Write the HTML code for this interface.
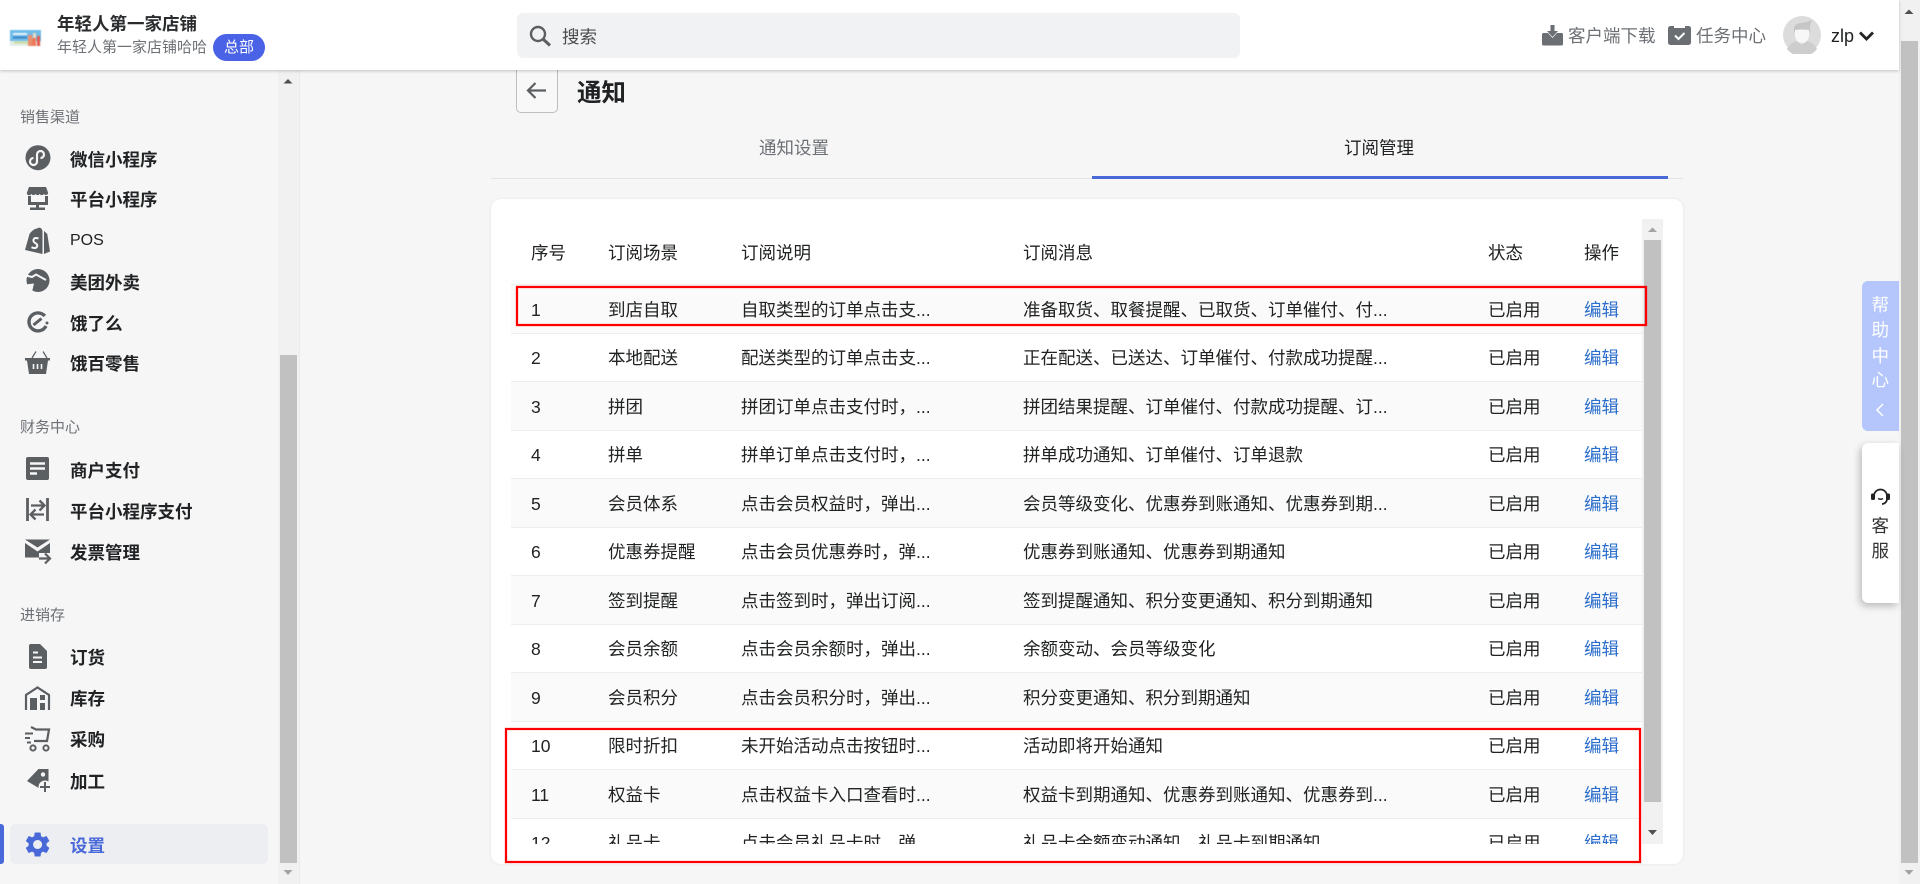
<!DOCTYPE html>
<html lang="zh-CN"><head><meta charset="utf-8"><title>通知</title>
<style>
*{box-sizing:border-box}
html,body{margin:0;padding:0;width:1920px;height:884px;overflow:hidden;background:#f6f6f7;color:#202223;font-family:"Liberation Sans","Noto Sans CJK SC",sans-serif;font-size:17.5px}
.a{position:absolute}
.t{position:absolute;white-space:nowrap;line-height:24px;height:24px}
.head{position:absolute;left:0;top:0;width:1899px;height:70px;background:#fff;box-shadow:0 1px 3px rgba(0,0,0,.22);z-index:5}
.side{position:absolute;left:0;top:70px;width:300px;height:814px;background:#f6f6f7;border-right:1px solid #ebebec}
.g{position:absolute;left:20px;font-size:15px;color:#6d7175;line-height:20px;white-space:nowrap}
.m{position:absolute;left:70px;font-weight:700;line-height:24px;white-space:nowrap;color:#202223}
.sb{position:absolute;background:#f1f1f1}
.th{position:absolute;background:#c1c1c1}
.card{position:absolute;left:491px;top:199px;width:1192px;height:665px;background:#fff;border-radius:10px;box-shadow:0 0 3px rgba(23,24,24,.08)}
.tb{position:absolute;left:511px;top:285px;width:1131px;height:559px;overflow:hidden}
.r{position:absolute;left:0;width:1131px;height:48.5px;border-bottom:1px solid #ededee;background:#fff}
.r.o{background:#fafafa}
.r span{position:absolute;top:12.5px;line-height:24px;white-space:nowrap}
.c1{left:20px}.c2{left:97px}.c3{left:230px}.c4{left:512px}.c5{left:977px}.c6{left:1073px;color:#2c6ecb}
.red{position:absolute;border:2px solid #f00;box-shadow:0 0 1px rgba(255,0,0,.7),inset 0 0 1px rgba(255,0,0,.7);z-index:3}
</style></head><body>

<div class="side">
<div class="g" style="top:38px">销售渠道</div>
<div class="m" style="top:78px">微信小程序</div>
<div class="m" style="top:118px">平台小程序</div>
<div class="m" style="top:159px;font-weight:400;font-size:16px">POS</div>
<div class="m" style="top:201px">美团外卖</div>
<div class="m" style="top:242px">饿了么</div>
<div class="m" style="top:282px">饿百零售</div>
<div class="g" style="top:348px">财务中心</div>
<div class="m" style="top:389px">商户支付</div>
<div class="m" style="top:430px">平台小程序支付</div>
<div class="m" style="top:471px">发票管理</div>
<div class="g" style="top:536px">进销存</div>
<div class="m" style="top:576px">订货</div>
<div class="m" style="top:617px">库存</div>
<div class="m" style="top:658px">采购</div>
<div class="m" style="top:700px">加工</div>
<div class="a" style="left:0;top:754px;width:4px;height:40px;background:#4a69d9;border-radius:0 3px 3px 0"></div>
<div class="a" style="left:10px;top:754px;width:258px;height:40px;background:#edeef1;border-radius:6px"></div>
<div class="m" style="top:764px;color:#4a69d9">设置</div>
<div class="sb" style="left:278px;top:0;width:21px;height:814px"></div>
<div class="th" style="left:280px;top:285px;width:17px;height:508px"></div>
</div>

<svg class="a" style="left:0;top:0;z-index:2" width="300" height="884" viewBox="0 0 300 884">
<g fill="#5c5f62" stroke="none">
<path d="M283.500 83.500L292.500 83.500L288 79z" fill="#505050"/>
<path d="M283.500 870L292.500 870L288 875z" fill="#a3a3a3"/>
<circle cx="38" cy="157.700" r="12.500"/>
<path d="M33.500 158a3.500 3.500 0 1 0 3.500 3.500v-7a3.500 3.500 0 1 1 3.500 3.500" fill="none" stroke="#f6f6f7" stroke-width="2.200"/>
<path d="M29 187h17l2.200 6a2.400 2.400 0 0 1-4.300 1a2.500 2.500 0 0 1-4.200 0a2.500 2.500 0 0 1-4.200 0a2.500 2.500 0 0 1-4.200 0a2.400 2.400 0 0 1-4.500-1z"/>
<path d="M28 196h3v6h14v-6h3v9h-9v2.500h6v2.500h-15v-2.500h6v-2.500h-8z"/>
<path d="M25 250L29.500 234Q33 229 37 228.500Q41 226 42.500 231L42.500 254z"/>
<path d="M44 231L47.300 234L50 251.500L44 254z"/>
<path d="M38.500 238.500q-4-1.500-5 1.200q-.5 2 2 3.500q2.500 1.500 1.500 3.500q-1.500 2.500-5.500.5" fill="none" stroke="#f6f6f7" stroke-width="2"/>
<circle cx="38" cy="280.500" r="11.500"/>
<path d="M26 275.500L32 277L36 274.500L46 280" fill="none" stroke="#f6f6f7" stroke-width="2"/>
<path d="M25 267H32L27 272zM25 284.500L34 283.500L31.500 294H25z" fill="#f6f6f7"/>
<path d="M44.800 316A9 9 0 1 0 46 326" fill="none" stroke="#5c5f62" stroke-width="3.400"/>
<path d="M33.500 325L41.500 318.500" fill="none" stroke="#5c5f62" stroke-width="3"/>
<circle cx="47" cy="323" r="1.500"/>
<path d="M32 358L36 351.500M43 351.500L47 358" fill="none" stroke="#5c5f62" stroke-width="1.200"/>
<rect x="25" y="358" width="25" height="2.500"/>
<path d="M27 360.500H48L46 374H29z"/>
<path d="M33.500 364v5M37.500 364v5M41.500 364v5" stroke="#f6f6f7" stroke-width="1.600"/>
<rect x="26" y="457" width="23" height="23" rx="2"/>
<path d="M30 463.500H45M30 468.500H45M30 473.500H37" stroke="#f6f6f7" stroke-width="2.400"/>
<path d="M27.500 498V521M47.500 498V521" stroke="#5c5f62" stroke-width="2.800"/>
<path d="M31 505.500H44M39.500 500.500L44.500 505.500L39.500 510.500M44 514.500H31M35.500 509.500L30.500 514.500L35.500 519.500" fill="none" stroke="#5c5f62" stroke-width="2.300"/>
<path d="M25 539.500H50L37.500 547.500z"/>
<path d="M25 543L37.500 551.500L50 543V553H39V557.500H25z"/>
<path d="M39 558.500H49M45 553.500L50 558.500L45 563.500" fill="none" stroke="#5c5f62" stroke-width="2.200"/>
<path d="M31 644h9l7 7v16a2 2 0 0 1-2 2h-14a2 2 0 0 1-2-2v-21a2 2 0 0 1 2-2z"/>
<path d="M33 652.500H38M33 657.500H42M33 662H42" stroke="#f6f6f7" stroke-width="2"/>
<path d="M26 710V695L37.500 687.500L49 695V710" fill="none" stroke="#5c5f62" stroke-width="2.200"/>
<rect x="30" y="698" width="7" height="12"/><rect x="40" y="695" width="5" height="5"/><rect x="40" y="703" width="5" height="7"/>
<path d="M31 727L36 729.500H49L47 741H34" fill="none" stroke="#5c5f62" stroke-width="2.200"/>
<path d="M25 733.500H33M25 738H30M27 742.500H31" stroke="#5c5f62" stroke-width="2"/>
<circle cx="33" cy="748" r="2.600" fill="none" stroke="#5c5f62" stroke-width="2"/>
<circle cx="46" cy="748" r="2.600" fill="none" stroke="#5c5f62" stroke-width="2"/>
<path d="M27 781L38.500 769H48.500V783L42 790Z"/>
<circle cx="43" cy="774.500" r="2.200" fill="#f6f6f7"/>
<circle cx="45" cy="787" r="6.500" fill="#f6f6f7"/>
<path d="M45 782V792M40 787H50" stroke="#5c5f62" stroke-width="2"/>
</g>
<path transform="translate(22.600 829.500) scale(1.25)" fill="#4a69d9" d="M19.140 12.940c.04-.3.06-.61.06-.94 0-.32-.02-.64-.07-.94l2.030-1.580c.18-.14.23-.41.12-.61l-1.920-3.320c-.12-.22-.37-.29-.59-.22l-2.390.96c-.5-.38-1.030-.7-1.620-.94l-.36-2.540c-.04-.24-.24-.41-.48-.41h-3.840c-.24 0-.43.17-.47.41l-.36 2.540c-.59.24-1.130.57-1.620.94l-2.390-.96c-.22-.08-.47 0-.59.22L2.740 8.870c-.12.21-.08.47.12.61l2.030 1.580c-.05.3-.09.63-.09.94s.02.64.07.94l-2.030 1.580c-.18.14-.23.41-.12.61l1.920 3.320c.12.22.37.29.59.22l2.390-.96c.5.38 1.030.7 1.620.94l.36 2.540c.05.24.24.41.48.41h3.840c.24 0 .44-.17.47-.41l.36-2.540c.59-.24 1.130-.56 1.620-.94l2.390.96c.22.08.47 0 .59-.22l1.920-3.320c.12-.22.07-.47-.12-.61l-2.010-1.580zM12 15.600c-1.980 0-3.600-1.620-3.600-3.600s1.620-3.600 3.600-3.600 3.600 1.620 3.600 3.600-1.620 3.600-3.600 3.600z"/>
</svg>

<div class="a" style="left:516px;top:60px;width:42px;height:53px;border:1px solid #babfc3;border-radius:5px;background:#f8f8f9"></div>
<svg class="a" style="left:526px;top:80px" width="22" height="20" viewBox="0 0 22 20"><path d="M2 10.500H20M9.500 3L2 10.500L9.500 18" fill="none" stroke="#5c5f62" stroke-width="2.200"/></svg>
<div class="t" style="left:577px;top:76px;height:36px;line-height:36px;font-size:24.500px;font-weight:700">通知</div>

<div class="t" style="left:759px;top:136px;color:#6d7175">通知设置</div>
<div class="t" style="left:1344px;top:136px">订阅管理</div>
<div class="a" style="left:491px;top:178px;width:1192px;height:1px;background:#e1e3e5"></div>
<div class="a" style="left:1092px;top:176px;width:576px;height:3px;background:#4a69d9"></div>

<div class="card"></div>
<div class="t" style="left:531px;top:241px">序号</div>
<div class="t" style="left:608px;top:241px">订阅场景</div>
<div class="t" style="left:741px;top:241px">订阅说明</div>
<div class="t" style="left:1023px;top:241px">订阅消息</div>
<div class="t" style="left:1488px;top:241px">状态</div>
<div class="t" style="left:1584px;top:241px">操作</div>

<div class="a" style="left:511px;top:284px;width:1131px;height:1px;background:#ededee"></div>
<div class="tb">
<div class="r o" style="top:0"><span class="c1">1</span><span class="c2">到店自取</span><span class="c3">自取类型的订单点击支...</span><span class="c4">准备取货、取餐提醒、已取货、订单催付、付...</span><span class="c5">已启用</span><span class="c6">编辑</span></div>
<div class="r" style="top:48.500px"><span class="c1">2</span><span class="c2">本地配送</span><span class="c3">配送类型的订单点击支...</span><span class="c4">正在配送、已送达、订单催付、付款成功提醒...</span><span class="c5">已启用</span><span class="c6">编辑</span></div>
<div class="r o" style="top:97px"><span class="c1">3</span><span class="c2">拼团</span><span class="c3">拼团订单点击支付时，...</span><span class="c4">拼团结果提醒、订单催付、付款成功提醒、订...</span><span class="c5">已启用</span><span class="c6">编辑</span></div>
<div class="r" style="top:145.500px"><span class="c1">4</span><span class="c2">拼单</span><span class="c3">拼单订单点击支付时，...</span><span class="c4">拼单成功通知、订单催付、订单退款</span><span class="c5">已启用</span><span class="c6">编辑</span></div>
<div class="r o" style="top:194px"><span class="c1">5</span><span class="c2">会员体系</span><span class="c3">点击会员权益时，弹出...</span><span class="c4">会员等级变化、优惠券到账通知、优惠券到期...</span><span class="c5">已启用</span><span class="c6">编辑</span></div>
<div class="r" style="top:242.500px"><span class="c1">6</span><span class="c2">优惠券提醒</span><span class="c3">点击会员优惠券时，弹...</span><span class="c4">优惠券到账通知、优惠券到期通知</span><span class="c5">已启用</span><span class="c6">编辑</span></div>
<div class="r o" style="top:291px"><span class="c1">7</span><span class="c2">签到提醒</span><span class="c3">点击签到时，弹出订阅...</span><span class="c4">签到提醒通知、积分变更通知、积分到期通知</span><span class="c5">已启用</span><span class="c6">编辑</span></div>
<div class="r" style="top:339.500px"><span class="c1">8</span><span class="c2">会员余额</span><span class="c3">点击会员余额时，弹出...</span><span class="c4">余额变动、会员等级变化</span><span class="c5">已启用</span><span class="c6">编辑</span></div>
<div class="r o" style="top:388px"><span class="c1">9</span><span class="c2">会员积分</span><span class="c3">点击会员积分时，弹出...</span><span class="c4">积分变更通知、积分到期通知</span><span class="c5">已启用</span><span class="c6">编辑</span></div>
<div class="r" style="top:436.500px"><span class="c1">10</span><span class="c2">限时折扣</span><span class="c3">未开始活动点击按钮时...</span><span class="c4">活动即将开始通知</span><span class="c5">已启用</span><span class="c6">编辑</span></div>
<div class="r o" style="top:485px"><span class="c1">11</span><span class="c2">权益卡</span><span class="c3">点击权益卡入口查看时...</span><span class="c4">权益卡到期通知、优惠券到账通知、优惠券到...</span><span class="c5">已启用</span><span class="c6">编辑</span></div>
<div class="r" style="top:533.500px"><span class="c1">12</span><span class="c2">礼品卡</span><span class="c3">点击会员礼品卡时，弹...</span><span class="c4">礼品卡余额变动通知、礼品卡到期通知</span><span class="c5">已启用</span><span class="c6">编辑</span></div>
</div>

<div class="sb" style="left:1642px;top:219px;width:21px;height:625px"></div>
<div class="th" style="left:1644px;top:240px;width:17px;height:562px"></div>
<svg class="a" style="left:1642px;top:219px" width="21" height="625" viewBox="0 0 21 625"><path d="M6 13H15L10.500 8.500z" fill="#a3a3a3"/><path d="M6 611H15L10.500 616z" fill="#505050"/></svg>

<div class="red" style="left:516px;top:286px;width:1131px;height:40px"></div>
<div class="red" style="left:505px;top:728px;width:1136px;height:135px"></div>

<div class="a" style="left:1862px;top:281px;width:37px;height:150px;background:#b4c6fc;border-radius:6px 0 0 6px;z-index:2"></div>
<div class="t" style="left:1871.500px;top:293px;color:#fff;z-index:3">帮</div>
<div class="t" style="left:1871.500px;top:318px;color:#fff;z-index:3">助</div>
<div class="t" style="left:1871.500px;top:344px;color:#fff;z-index:3">中</div>
<div class="t" style="left:1871.500px;top:368px;color:#fff;z-index:3">心</div>
<svg class="a" style="left:1874px;top:402px;z-index:3" width="12" height="16" viewBox="0 0 12 16"><path d="M9 2L3 8L9 14" fill="none" stroke="#fff" stroke-width="1.500"/></svg>

<div class="a" style="left:1862px;top:443px;width:37px;height:160px;background:#fff;border-radius:6px 0 0 6px;box-shadow:-2px 3px 8px rgba(0,0,0,.25);z-index:2"></div>
<svg class="a" style="left:1870px;top:486px;z-index:3" width="21" height="21" viewBox="0 0 21 21"><path d="M4 10A6.500 6.500 0 0 1 17 10V13A5 5 0 0 1 12 18" fill="none" stroke="#202223" stroke-width="1.700"/><rect x="1" y="7.500" width="4" height="6.500" rx="1.500" fill="#202223"/><rect x="16" y="7.500" width="4" height="6.500" rx="1.500" fill="#202223"/><path d="M8 12.500Q10.500 14 13 12.500" fill="none" stroke="#202223" stroke-width="1.400"/></svg>
<div class="t" style="left:1871.500px;top:514px;color:#333;z-index:3">客</div>
<div class="t" style="left:1871.500px;top:539px;color:#333;z-index:3">服</div>

<div class="head">
<svg class="a" style="left:10px;top:30px;filter:blur(.5px)" width="31" height="16" viewBox="0 0 31 16"><rect width="31" height="16" fill="#e4ece6"/><rect width="31" height="11" fill="#6fbce9"/><rect x="3" y="3" width="14" height="2" fill="#e8f4fb"/><rect x="3" y="6.500" width="14" height="2" fill="#3d86c6"/><rect x="4" y="11.500" width="14" height="2" fill="#c9dd9c"/><rect x="18" y="5" width="4" height="11" fill="#e98f6e"/><rect x="23" y="3" width="3" height="5" fill="#e6d9c3"/><rect x="22" y="8" width="4" height="8" fill="#ee7a5b"/><rect x="27" y="6" width="3" height="10" fill="#e55a4c"/></svg>
<div class="t" style="left:57px;top:12px;font-weight:700;color:#2a2c2e">年轻人第一家店铺</div>
<div class="t" style="left:57px;top:36px;font-size:15px;color:#6d7175">年轻人第一家店铺哈哈</div>
<div class="a" style="left:213px;top:34px;width:52px;height:27px;border-radius:14px;background:#4962e6;color:#fff;font-size:15px;line-height:27px;text-align:center">总部</div>

<div class="a" style="left:517px;top:13px;width:723px;height:45px;background:#f1f2f4;border-radius:6px"></div>
<svg class="a" style="left:528px;top:24px" width="24" height="24" viewBox="0 0 24 24"><circle cx="10" cy="10" r="7" fill="none" stroke="#5c5f62" stroke-width="2.400"/><path d="M15 15L22 21.500" stroke="#5c5f62" stroke-width="3"/></svg>
<div class="t" style="left:562px;top:25px;color:#4b4d50">搜索</div>

<svg class="a" style="left:1542px;top:24px" width="21" height="22" viewBox="0 0 21 22"><path d="M1.500 9H6L10.500 14L15 9H19.500A1.500 1.500 0 0 1 21 10.500V20A1.500 1.500 0 0 1 19.500 21.500H1.500A1.500 1.500 0 0 1 0 20V10.500A1.500 1.500 0 0 1 1.500 9z" fill="#6b6e72"/><path d="M8.500 1H12.500V7H16L10.500 13L5 7H8.500z" fill="#6b6e72"/></svg>
<div class="t" style="left:1568px;top:24px;color:#6d7175">客户端下载</div>
<svg class="a" style="left:1668px;top:25px" width="23" height="20" viewBox="0 0 23 20"><path d="M2.500 1H6V3H17V1H20.500A2.500 2.500 0 0 1 23 3.500V17.500A2.500 2.500 0 0 1 20.500 20H2.500A2.500 2.500 0 0 1 0 17.500V3.500A2.500 2.500 0 0 1 2.500 1z" fill="#6b6e72"/><path d="M7 10.500L10.500 14L16.500 8" fill="none" stroke="#fff" stroke-width="2"/></svg>
<div class="t" style="left:1696px;top:24px;color:#6d7175">任务中心</div>
<svg class="a" style="left:1783px;top:16px" width="38" height="38" viewBox="0 0 38 38"><circle cx="19" cy="19" r="19" fill="#dcdcdc"/><path d="M4 33Q8 26 14 25L19 29L24 25Q30 26 34 33A19 19 0 0 1 4 33z" fill="#cdcdcd"/><path d="M11 14Q10 7 19 7Q24 6 29 4Q27 8 27 14V16H11z" fill="#c6c6c6"/><path d="M12 14Q19 13 26 14V20Q25 27 19 27Q13 27 12 20z" fill="#f7f7f7"/></svg>
<div class="t" style="left:1831px;top:24px;font-size:18px;color:#202223">zlp</div>
<svg class="a" style="left:1858px;top:30px" width="17" height="12" viewBox="0 0 17 12"><path d="M2 2.500L8.500 9L15 2.500" fill="none" stroke="#202223" stroke-width="2.800"/></svg>
</div>

<div class="sb" style="left:1899px;top:0;width:21px;height:884px"></div>
<div class="th" style="left:1901px;top:41px;width:17px;height:822px"></div>
<svg class="a" style="left:1899px;top:0" width="21" height="884" viewBox="0 0 21 884"><path d="M5.500 14H14.500L10 9.500z" fill="#505050"/><path d="M5.500 870H14.500L10 875z" fill="#a3a3a3"/></svg>
</body></html>
